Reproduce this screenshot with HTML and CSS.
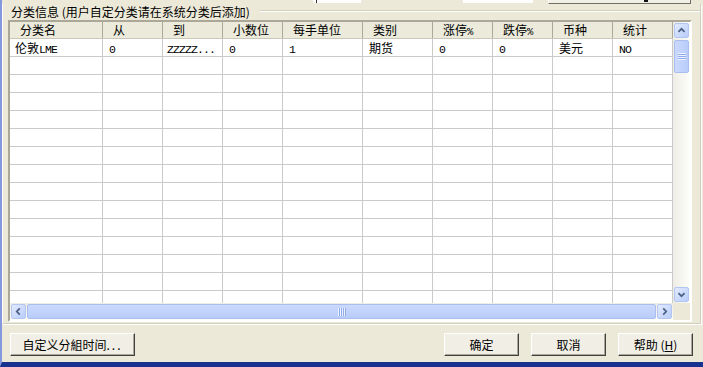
FILE: index.html
```html
<!DOCTYPE html>
<html>
<head>
<meta charset="utf-8">
<link rel="stylesheet" href="styles.css">
</head>
<body>
<div class="win">
  <div class="top">
    <div class="fld f1"><span class="caret"></span></div>
    <div class="fld f2"></div>
    <div class="tbtn"><span class="tglyph"></span></div>
  </div>
  <div class="group">
    <div class="ghead">
      <span class="glabel">分类信息 (用户自定分类请在系统分类后添加)</span>
      <span class="gline"></span>
    </div>
    <div class="lv">
      <div class="lv-main">
        <div class="lv-body">
          <div class="row hdr">
            <div class="c">分类名</div><div class="c">从</div><div class="c">到</div><div class="c">小数位</div><div class="c">每手单位</div><div class="c">类别</div><div class="c">涨停<span class="pct">%</span></div><div class="c">跌停<span class="pct">%</span></div><div class="c">币种</div><div class="c">统计</div>
          </div>
          <div class="row">
            <div class="c first">伦敦<span class="lat">LME</span></div><div class="c"><span class="lat">0</span></div><div class="c zz"><span class="lat">ZZZZZ...</span></div><div class="c"><span class="lat">0</span></div><div class="c"><span class="lat">1</span></div><div class="c">期货</div><div class="c"><span class="lat">0</span></div><div class="c"><span class="lat">0</span></div><div class="c">美元</div><div class="c"><span class="lat">NO</span></div>
          </div>
          <div class="row"><div class="c"></div><div class="c"></div><div class="c"></div><div class="c"></div><div class="c"></div><div class="c"></div><div class="c"></div><div class="c"></div><div class="c"></div><div class="c"></div></div>
          <div class="row"><div class="c"></div><div class="c"></div><div class="c"></div><div class="c"></div><div class="c"></div><div class="c"></div><div class="c"></div><div class="c"></div><div class="c"></div><div class="c"></div></div>
          <div class="row"><div class="c"></div><div class="c"></div><div class="c"></div><div class="c"></div><div class="c"></div><div class="c"></div><div class="c"></div><div class="c"></div><div class="c"></div><div class="c"></div></div>
          <div class="row"><div class="c"></div><div class="c"></div><div class="c"></div><div class="c"></div><div class="c"></div><div class="c"></div><div class="c"></div><div class="c"></div><div class="c"></div><div class="c"></div></div>
          <div class="row"><div class="c"></div><div class="c"></div><div class="c"></div><div class="c"></div><div class="c"></div><div class="c"></div><div class="c"></div><div class="c"></div><div class="c"></div><div class="c"></div></div>
          <div class="row"><div class="c"></div><div class="c"></div><div class="c"></div><div class="c"></div><div class="c"></div><div class="c"></div><div class="c"></div><div class="c"></div><div class="c"></div><div class="c"></div></div>
          <div class="row"><div class="c"></div><div class="c"></div><div class="c"></div><div class="c"></div><div class="c"></div><div class="c"></div><div class="c"></div><div class="c"></div><div class="c"></div><div class="c"></div></div>
          <div class="row"><div class="c"></div><div class="c"></div><div class="c"></div><div class="c"></div><div class="c"></div><div class="c"></div><div class="c"></div><div class="c"></div><div class="c"></div><div class="c"></div></div>
          <div class="row"><div class="c"></div><div class="c"></div><div class="c"></div><div class="c"></div><div class="c"></div><div class="c"></div><div class="c"></div><div class="c"></div><div class="c"></div><div class="c"></div></div>
          <div class="row"><div class="c"></div><div class="c"></div><div class="c"></div><div class="c"></div><div class="c"></div><div class="c"></div><div class="c"></div><div class="c"></div><div class="c"></div><div class="c"></div></div>
          <div class="row"><div class="c"></div><div class="c"></div><div class="c"></div><div class="c"></div><div class="c"></div><div class="c"></div><div class="c"></div><div class="c"></div><div class="c"></div><div class="c"></div></div>
          <div class="row"><div class="c"></div><div class="c"></div><div class="c"></div><div class="c"></div><div class="c"></div><div class="c"></div><div class="c"></div><div class="c"></div><div class="c"></div><div class="c"></div></div>
          <div class="row"><div class="c"></div><div class="c"></div><div class="c"></div><div class="c"></div><div class="c"></div><div class="c"></div><div class="c"></div><div class="c"></div><div class="c"></div><div class="c"></div></div>
          <div class="row"><div class="c"></div><div class="c"></div><div class="c"></div><div class="c"></div><div class="c"></div><div class="c"></div><div class="c"></div><div class="c"></div><div class="c"></div><div class="c"></div></div>
        </div>
        <div class="vsb">
          <div class="sbtn"><svg width="15" height="15" viewBox="0 0 15 15"><polyline points="4,9 7.5,5.5 11,9" fill="none" stroke="#4d6185" stroke-width="2"/></svg></div>
          <div class="vthumb"><span class="vgrip"></span></div>
          <div class="vtrack"></div>
          <div class="sbtn"><svg width="15" height="15" viewBox="0 0 15 15"><polyline points="4,6 7.5,9.5 11,6" fill="none" stroke="#4d6185" stroke-width="2"/></svg></div>
        </div>
      </div>
      <div class="hsb-row">
        <div class="hsb">
          <div class="sbtn"><svg width="15" height="15" viewBox="0 0 15 15"><polyline points="9,4 5.5,7.5 9,11" fill="none" stroke="#4d6185" stroke-width="2"/></svg></div>
          <div class="hthumb"><span class="hgrip"></span></div>
          <div class="sbtn"><svg width="15" height="15" viewBox="0 0 15 15"><polyline points="6,4 9.5,7.5 6,11" fill="none" stroke="#4d6185" stroke-width="2"/></svg></div>
        </div>
        <div class="sizebox"></div>
      </div>
    </div>
  </div>
  <div class="btns">
    <button class="btn wide">自定义分組时间<span class="dots">...</span></button>
    <span class="spacer"></span>
    <button class="btn">确定</button>
    <button class="btn">取消</button>
    <button class="btn">帮助 (<u>H</u>)</button>
  </div>
</div>
</body>
</html>
```

FILE: styles.css
```css
html, body {
  margin: 0;
  padding: 0;
  background: #ece9d8;
}
body {
  width: 703px;
  height: 367px;
  overflow: hidden;
  font-family: "Noto Sans CJK SC", "Liberation Sans", sans-serif;
  font-size: 12px;
  color: #000;
}
.win {
  width: 703px;
  height: 367px;
  box-sizing: border-box;
  border-left: 2px solid #8597dd;
  border-bottom: 5px solid #17338f;
  display: flex;
  flex-direction: column;
}
.top {
  height: 4px;
  display: flex;
  align-items: flex-start;
}
.fld {
  height: 3px;
  background: #fff;
  display: flex;
}
.f1 { margin-left: 311px; width: 48px; }
.f2 { margin-left: 102px; width: 70px; }
.caret { width: 1px; height: 3px; margin-left: 3px; background: #333; }
.tbtn {
  margin-left: 15px;
  width: 143px;
  height: 4px;
  box-sizing: border-box;
  border-right: 1px solid #716f64;
  border-bottom: 1px solid #716f64;
  border-left: 1px solid #fff;
  background: #f2f0e6;
  display: flex;
}
.tglyph { width: 4px; height: 2px; margin-left: 95px; background: #111; }

.group {
  width: 699px;
  box-sizing: border-box;
  border-left: 1px solid #fff;
  border-right: 1px solid #d0d0bf;
  border-bottom: 1px solid #d0d0bf;
  box-shadow: 1px 1px 0 #fff;
  display: flex;
  flex-direction: column;
}
.ghead {
  height: 16px;
  display: flex;
  align-items: flex-start;
}
.glabel {
  margin-left: 8px;
  line-height: 15px;
  white-space: nowrap;
}
.gline {
  flex: 1;
  margin-top: 6px;
  margin-left: 10px;
  height: 1px;
  background: #d0d0bf;
  box-shadow: 0 1px 0 #fff;
}
.lv {
  margin-left: 5px;
  margin-bottom: 1px;
  width: 684px;
  height: 302px;
  box-sizing: border-box;
  border: 2px solid;
  border-color: #aca899 #fff #fff #aca899;
  box-shadow: inset 1px 1px 0 #716f64;
  display: flex;
  flex-direction: column;
  background: #fff;
}
.lv-main {
  height: 281px;
  display: flex;
}
.lv-body {
  width: 663px;
  overflow: hidden;
  background: #fff;
}
.row {
  display: grid;
  grid-template-columns: 93px 60px 60px 60px 80px 70px 60px 60px 60px 60px;
  height: 18px;
  box-sizing: border-box;
  border-bottom: 1px solid #cacaca;
}
.row .c {
  border-right: 1px solid #cacaca;
  line-height: 17px;
  padding-left: 6px;
  white-space: nowrap;
  overflow: hidden;
}
.row .c.first { padding-left: 5px; }
.row .c.zz { padding-left: 4px; }
.lat {
  font-family: "Liberation Mono", "DejaVu Sans Mono", monospace;
  font-size: 11.5px;
  letter-spacing: -0.9px;
}
.pct {
  font-family: "Liberation Mono", monospace;
  font-size: 10.5px;
  letter-spacing: -0.5px;
}
.row.hdr {
  height: 17px;
  background: #ebeadb;
  border-bottom: 1px solid #cbc7b8;
}
.row.hdr .c {
  border-right: 1px solid #aca899;
  line-height: 16px;
  padding-left: 10px;
}

.vsb {
  width: 17px;
  display: flex;
  flex-direction: column;
  background: linear-gradient(to right, #eeede5, #fdfdfa);
}
.sbtn {
  width: 17px;
  height: 17px;
  box-sizing: border-box;
  padding: 1px;
  flex: none;
}
.sbtn svg {
  display: block;
  width: 15px;
  height: 15px;
  box-sizing: border-box;
  border: 1px solid #b3c6f2;
  border-radius: 2px;
  background: linear-gradient(135deg, #e2eafe, #b9cdfa);
}
.vthumb {
  margin: 1px 1px 0 1px;
  height: 33px;
  box-sizing: border-box;
  border: 1px solid #a9bdef;
  border-radius: 2px;
  background: linear-gradient(to right, #cbd9fd, #b8ccfa);
  display: flex;
  align-items: center;
  justify-content: center;
  flex: none;
}
.vgrip {
  width: 8px;
  height: 7px;
  background: repeating-linear-gradient(to bottom, #eef3fe 0 1px, #8faaf0 1px 2px);
}
.vtrack { flex: 1; }

.hsb-row {
  height: 17px;
  display: flex;
  background: #ece9d8;
}
.hsb {
  width: 663px;
  display: flex;
  background: linear-gradient(to bottom, #eeede5, #fdfdfa);
}
.hthumb {
  flex: 1;
  margin: 1px 0;
  box-sizing: border-box;
  border: 1px solid #a9bdef;
  border-radius: 2px;
  background: linear-gradient(to bottom, #cbd9fd, #b8ccfa);
  display: flex;
  align-items: center;
  justify-content: center;
}
.hgrip {
  width: 8px;
  height: 8px;
  background: repeating-linear-gradient(to right, #eef3fe 0 1px, #8faaf0 1px 2px);
}
.sizebox {
  flex: 1;
  background: #ece9d8;
}

.btns {
  margin-top: 9px;
  display: flex;
  padding-left: 8px;
  padding-right: 10px;
  gap: 12px;
}
.spacer { flex: 1; }
.btn {
  height: 23px;
  width: 75px;
  margin: 0;
  padding: 0;
  box-sizing: border-box;
  font-family: "Noto Sans CJK SC", "Liberation Sans", sans-serif;
  font-size: 12px;
  color: #000;
  background: #f1efe5;
  border: 1px solid;
  border-color: #fff #404040 #404040 #fff;
  box-shadow: inset -1px -1px 0 #aca899;
  line-height: 19px;
}
.btn.wide { width: 125px; }
.btn u { text-decoration: underline; }
.dots { letter-spacing: 2px; }
```
